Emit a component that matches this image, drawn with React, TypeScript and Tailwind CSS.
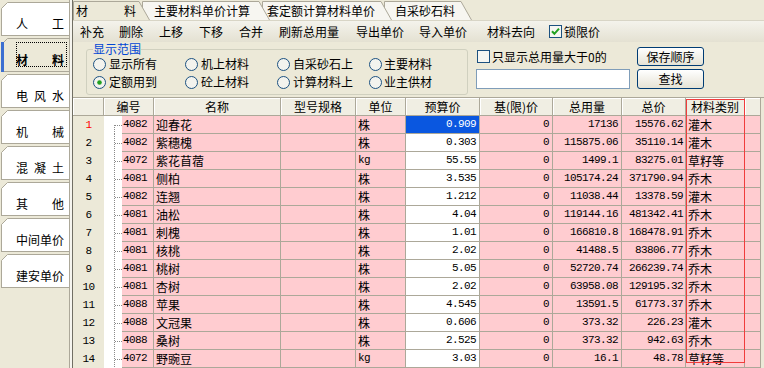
import React from "react"

type Row = {
    code: string
    name: string
    unit: string
    price: string
    qty: string
    total: string
    cat: string
}

const rows: Row[] = [
    { code: "4082", name: "迎春花", unit: "株", price: "0.909", qty: "17136", total: "15576.62", cat: "灌木" },
    { code: "4082", name: "紫穗槐", unit: "株", price: "0.303", qty: "115875.06", total: "35110.14", cat: "灌木" },
    { code: "4072", name: "紫花苜蓿", unit: "kg", price: "55.55", qty: "1499.1", total: "83275.01", cat: "草籽等" },
    { code: "4081", name: "侧柏", unit: "株", price: "3.535", qty: "105174.24", total: "371790.94", cat: "乔木" },
    { code: "4082", name: "连翘", unit: "株", price: "1.212", qty: "11038.44", total: "13378.59", cat: "灌木" },
    { code: "4081", name: "油松", unit: "株", price: "4.04", qty: "119144.16", total: "481342.41", cat: "乔木" },
    { code: "4081", name: "刺槐", unit: "株", price: "1.01", qty: "166810.8", total: "168478.91", cat: "乔木" },
    { code: "4081", name: "核桃", unit: "株", price: "2.02", qty: "41488.5", total: "83806.77", cat: "乔木" },
    { code: "4081", name: "桃树", unit: "株", price: "5.05", qty: "52720.74", total: "266239.74", cat: "乔木" },
    { code: "4081", name: "杏树", unit: "株", price: "2.02", qty: "63958.08", total: "129195.32", cat: "乔木" },
    { code: "4088", name: "苹果", unit: "株", price: "4.545", qty: "13591.5", total: "61773.37", cat: "乔木" },
    { code: "4088", name: "文冠果", unit: "株", price: "0.606", qty: "373.32", total: "226.23", cat: "灌木" },
    { code: "4088", name: "桑树", unit: "株", price: "2.525", qty: "373.32", total: "942.63", cat: "乔木" },
    { code: "4072", name: "野豌豆", unit: "kg", price: "3.03", qty: "16.1", total: "48.78", cat: "草籽等" },
]

const sideTabs = [
    ["人", "工"],
    ["材", "料"],
    ["电", "风", "水"],
    ["机", "械"],
    ["混", "凝", "土"],
    ["其", "他"],
    ["中", "间", "单", "价"],
    ["建", "安", "单", "价"],
]

const mono = "font-['Liberation_Mono',monospace] text-[11px] tracking-[-0.6px]"
const pink = "bg-[#ffccd0] border-r border-b border-[#aca899]"
const head = "bg-[#f0eee3] border-r border-b border-[#aca899] shadow-[inset_1px_1px_0_#ffffff] flex items-center justify-center"

const Radio = ({ checked }: { checked?: boolean }) => (
    <svg width="13" height="13" viewBox="0 0 13 13">
        <circle cx="6.5" cy="6.5" r="6" fill="#f3f3ee" stroke="#1c5180" />
        {checked && <circle cx="6.5" cy="6.5" r="2.3" fill="#21a121" />}
    </svg>
)

const Check = ({ checked }: { checked?: boolean }) => (
    <svg width="13" height="13" viewBox="0 0 13 13">
        <rect x="0.5" y="0.5" width="12" height="12" fill="#f6f6f2" stroke="#1c5180" />
        {checked && <path d="M3 6.2 L5.4 8.8 L10 3.6" fill="none" stroke="#21a121" strokeWidth="2" />}
    </svg>
)

const Sidebar = () => (
    <div className="flex w-[69px] flex-col gap-[2px] pt-[2px]">
        {sideTabs.map((chars, i) => {
            const active = i === 1
            return (
                <div
                    key={i}
                    className={`relative ml-[1px] flex h-[34px] items-end border-y border-l border-[#aca899] pb-[5px] pl-[14px] ${active ? "bg-[#ece9d8] font-bold" : "bg-white"}`}
                >
                    <svg className="absolute -left-[1px] -top-[1px]" width="7" height="7" viewBox="0 0 7 7">
                        <path d="M0 0 H7 L0 7 Z" fill="#ece9d8" />
                        <path d="M0.5 6.5 L6.5 0.5" stroke="#aca899" />
                    </svg>
                    {active && <div className="absolute -left-[1px] top-[3px] h-[30px] w-[3px] bg-[#3c6fd1]" />}
                    {active && <div className="absolute left-[14px] top-[3px] h-[25px] w-[51px] border border-dotted border-black" />}
                    <div className="flex w-[48px] justify-between leading-[12px]">
                        {chars.map((c, j) => <span key={j}>{c}</span>)}
                    </div>
                </div>
            )
        })}
    </div>
)

const TopTab = ({ w, className, active, children }: { w: number, className: string, active?: boolean, children: React.ReactNode }) => (
    <div className={`relative flex h-[19px] items-center ${className}`}>
        <svg className="absolute left-0 top-0" width={w} height="19" viewBox={`0 0 ${w} 19`}>
            <path d={`M0.5 19 V0.5 H${w - 11} L${w - 0.5} 19`} fill={active ? "#ece9d8" : "#f7f6f1"} stroke="#aca899" />
        </svg>
        <div className="relative leading-[12px]">{children}</div>
    </div>
)

const TabStrip = () => (
    <div className="flex h-[21px] items-end border-b border-[#d8d5c6] bg-[#ece9d8]">
        <TopTab w={77} active className="z-[4] w-[77px] pl-[3px]">
            <div className="flex w-[60px] justify-between"><span>材</span><span>料</span></div>
        </TopTab>
        <TopTab w={128} className="z-[3] -ml-[8px] w-[128px] pl-[12px]">主要材料单价计算</TopTab>
        <TopTab w={130} className="z-[2] -ml-[8px] w-[130px] pl-[5px]">套定额计算材料单价</TopTab>
        <TopTab w={88} className="z-[1] -ml-[8px] w-[88px] pl-[11px]">自采砂石料</TopTab>
    </div>
)

const Toolbar = () => (
    <div className="flex h-[21px] items-center bg-linear-to-b from-[#f4f3ec] to-[#e4e1d2] pl-[7px] leading-[12px]">
        <span className="w-[39px]">补充</span>
        <span className="w-[40px]">删除</span>
        <span className="w-[40px]">上移</span>
        <span className="w-[40px]">下移</span>
        <span className="w-[40px]">合并</span>
        <span className="w-[77px]">刷新总用量</span>
        <span className="w-[63px]">导出单价</span>
        <span className="w-[68px]">导入单价</span>
        <span className="w-[62px]">材料去向</span>
        <span className="flex items-center gap-[2px]"><Check checked />锁限价</span>
    </div>
)

const Filters = () => (
    <div className="flex h-[55px] items-start">
        <fieldset className="ml-[13px] mt-[1px] h-[52px] w-[377px] rounded-[3px] border border-[#d0d0bf] px-[6px]">
            <legend className="px-0 leading-[12px] text-[#0046d5]">显示范围</legend>
            <div className="grid grid-cols-[92px_92px_92px_92px] grid-rows-[18px_18px] leading-[12px]">
                <label className="flex items-center gap-[3px]"><Radio />显示所有</label>
                <label className="flex items-center gap-[3px]"><Radio />机上材料</label>
                <label className="flex items-center gap-[3px]"><Radio />自采砂石上</label>
                <label className="flex items-center gap-[2px]"><Radio />主要材料</label>
                <label className="flex items-center gap-[3px]"><Radio checked />定额用到</label>
                <label className="flex items-center gap-[3px]"><Radio />砼上材料</label>
                <label className="flex items-center gap-[3px]"><Radio />计算材料上</label>
                <label className="flex items-center gap-[2px]"><Radio />业主供材</label>
            </div>
        </fieldset>
        <div className="ml-[8px] mt-[8px] flex flex-col">
            <label className="ml-[1px] flex h-[13px] items-center gap-[2px] leading-[12px]"><Check />只显示总用量大于0的</label>
            <div className="mt-[6px] h-[20px] w-[154px] border border-[#7f9db9] bg-white" />
        </div>
        <div className="ml-[7px] mt-[5px] flex flex-col gap-[3px] leading-[12px]">
            <button className="flex h-[19px] w-[67px] items-center justify-center rounded-[3px] border border-[#003c74] bg-linear-to-b from-white to-[#e6e3d5]">保存顺序</button>
            <button className="flex h-[20px] w-[67px] items-center justify-center rounded-[3px] border border-[#003c74] bg-linear-to-b from-white to-[#e6e3d5]">查找</button>
        </div>
    </div>
)

const Tree = ({ first }: { first: boolean }) => (
    <svg width="18" height="18" viewBox="0 0 18 18">
        <path d={`M10.5 ${first ? 9 : 0} V18 M11 9.5 H18`} stroke="#8a8a8a" strokeDasharray="1 1" fill="none" />
    </svg>
)

const Grid = () => (
    <div className="relative flex flex-col border-t border-[#aca899] leading-none">
        <div className="flex h-[18px]">
            <div className={`w-[31px] ${head}`} />
            <div className={`w-[50px] ${head}`}>编号</div>
            <div className={`w-[127px] ${head}`}>名称</div>
            <div className={`w-[75px] ${head}`}>型号规格</div>
            <div className={`w-[50px] ${head}`}>单位</div>
            <div className={`w-[74px] ${head}`}>预算价</div>
            <div className={`w-[73px] ${head}`}>基(限)价</div>
            <div className={`w-[69px] ${head}`}>总用量</div>
            <div className={`w-[64px] ${head}`}>总价</div>
            <div className={`w-[59px] ${head}`}>材料类别</div>
            <div className={`w-[16px] ${head}`} />
        </div>
        {rows.map((r, i) => (
            <div key={i} className="flex h-[18px]">
                <div className={`flex w-[31px] items-center justify-center bg-[#ece9d8] ${mono} ${i === 0 ? "text-[#ff0000]" : ""}`}>{i + 1}</div>
                <div className="w-[18px] bg-white"><Tree first={i === 0} /></div>
                <div className={`flex w-[32px] items-center pl-[1px] ${pink} ${mono}`}>{r.code}</div>
                <div className={`flex w-[127px] items-center pl-[2px] ${pink}`}>{r.name}</div>
                <div className={`w-[75px] ${pink}`} />
                <div className={`flex w-[50px] items-center pl-[2px] ${pink} ${r.unit === "kg" ? mono : ""}`}>{r.unit}</div>
                <div className={`flex w-[74px] items-center justify-end border-r border-b border-[#aca899] pr-[3px] ${mono} ${i === 0 ? "bg-[#0a57e0] text-white" : "bg-white"}`}>{r.price}</div>
                <div className={`flex w-[73px] items-center justify-end pr-[3px] ${pink} ${mono}`}>0</div>
                <div className={`flex w-[69px] items-center justify-end pr-[3px] ${pink} ${mono}`}>{r.qty}</div>
                <div className={`flex w-[64px] items-center justify-end pr-[2px] ${pink} ${mono}`}>{r.total}</div>
                <div className={`flex w-[59px] items-center pl-[2px] ${pink}`}>{r.cat}</div>
                <div className={`w-[16px] ${pink}`} />
            </div>
        ))}
        <div className="absolute left-[613px] top-[1px] h-[264px] w-[59px] border border-[#f03c3c]" />
    </div>
)

export default function App() {
    return (
        <div className="flex h-[368px] w-[764px] overflow-hidden bg-[#ece9d8] font-['Noto_Sans_CJK_SC',sans-serif] text-[12px] text-black">
            <Sidebar />
            <div className="w-[4px] border-x border-l-[#aca899] border-r-[#716f64] bg-[#f6f5ef]" />
            <div className="flex w-[691px] flex-col">
                <TabStrip />
                <Toolbar />
                <Filters />
                <Grid />
            </div>
        </div>
    )
}
